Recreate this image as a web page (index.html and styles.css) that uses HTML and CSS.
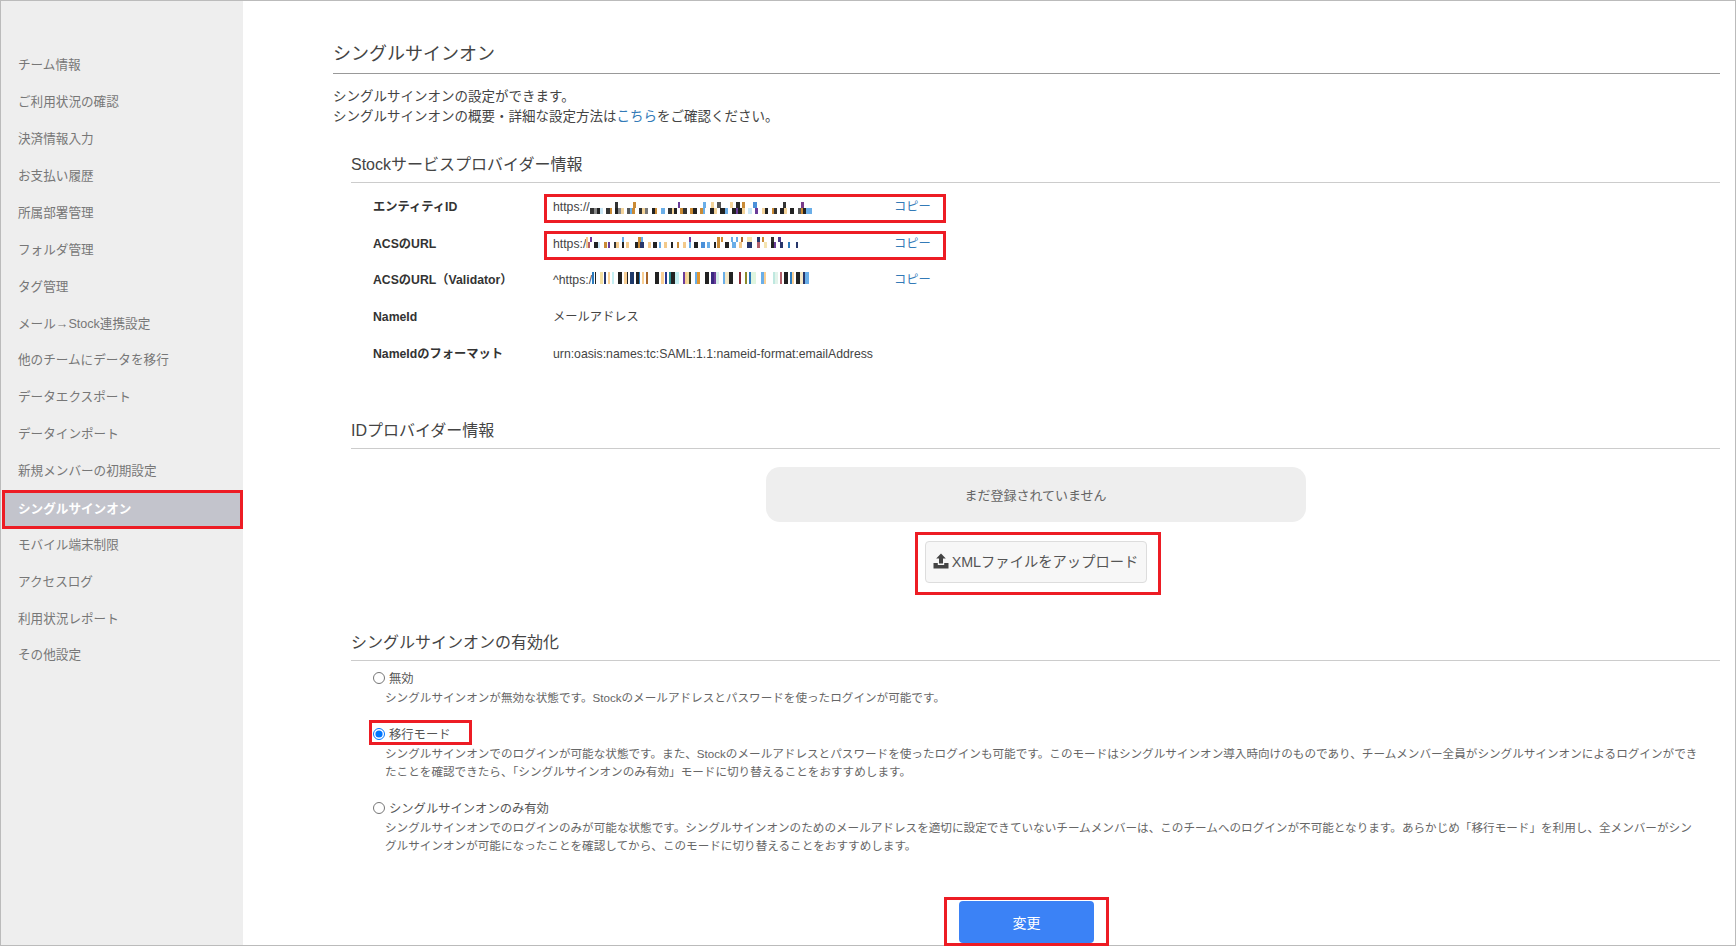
FILE: index.html
```html
<!DOCTYPE html>
<html lang="ja">
<head>
  <meta charset="UTF-8">
  <title>シングルサインオン</title>
  <link rel="stylesheet" href="styles.css">
</head>
<body>
  <div class="frame">
    <nav class="sidebar">
      <a class="nav-item">チーム情報</a>
      <a class="nav-item">ご利用状況の確認</a>
      <a class="nav-item">決済情報入力</a>
      <a class="nav-item">お支払い履歴</a>
      <a class="nav-item">所属部署管理</a>
      <a class="nav-item">フォルダ管理</a>
      <a class="nav-item">タグ管理</a>
      <a class="nav-item">メール→Stock連携設定</a>
      <a class="nav-item">他のチームにデータを移行</a>
      <a class="nav-item">データエクスポート</a>
      <a class="nav-item">データインポート</a>
      <a class="nav-item">新規メンバーの初期設定</a>
      <a class="nav-item active">シングルサインオン</a>
      <a class="nav-item">モバイル端末制限</a>
      <a class="nav-item">アクセスログ</a>
      <a class="nav-item">利用状況レポート</a>
      <a class="nav-item">その他設定</a>
    </nav>

    <main class="content">
      <h1 class="page-title">シングルサインオン</h1>
      <p class="lead">シングルサインオンの設定ができます。<br>シングルサインオンの概要・詳細な設定方法は<a class="link">こちら</a>をご確認ください。</p>

      <section class="section sp-section">
        <h2 class="section-title">Stockサービスプロバイダー情報</h2>
        <div class="info-row marked">
          <span class="info-label">エンティティID</span>
          <span class="info-value">https://<i class="mosaic mosaic-a"></i></span>
          <a class="copy">コピー</a>
        </div>
        <div class="info-row marked">
          <span class="info-label">ACSのURL</span>
          <span class="info-value">https:/<i class="mosaic mosaic-b"></i></span>
          <a class="copy">コピー</a>
        </div>
        <div class="info-row">
          <span class="info-label">ACSのURL（Validator）</span>
          <span class="info-value">^https:/<i class="mosaic mosaic-c"></i></span>
          <a class="copy">コピー</a>
        </div>
        <div class="info-row">
          <span class="info-label">NameId</span>
          <span class="info-value">メールアドレス</span>
        </div>
        <div class="info-row">
          <span class="info-label">NameIdのフォーマット</span>
          <span class="info-value">urn:oasis:names:tc:SAML:1.1:nameid-format:emailAddress</span>
        </div>
      </section>

      <section class="section idp-section">
        <h2 class="section-title">IDプロバイダー情報</h2>
        <div class="empty-box">まだ登録されていません</div>
        <div class="upload-wrap">
          <button class="upload-btn">
            <svg class="upload-icon" viewBox="0 0 16 16"><path d="M8 .5 L12.8 5.6 H10 V10.6 H6 V5.6 H3.2 Z"/><path d="M.5 10 H4.8 V12 H11.2 V10 H15.5 V15.5 H.5 Z"/></svg>
            XMLファイルをアップロード
          </button>
        </div>
      </section>

      <section class="section enable-section">
        <h2 class="section-title">シングルサインオンの有効化</h2>
        <div class="option">
          <label class="option-label"><input type="radio" name="sso">無効</label>
          <p class="option-desc">シングルサインオンが無効な状態です。Stockのメールアドレスとパスワードを使ったログインが可能です。</p>
        </div>
        <div class="option">
          <label class="option-label marked-radio"><input type="radio" name="sso" checked>移行モード</label>
          <p class="option-desc">シングルサインオンでのログインが可能な状態です。また、Stockのメールアドレスとパスワードを使ったログインも可能です。このモードはシングルサインオン導入時向けのものであり、チームメンバー全員がシングルサインオンによるログインができたことを確認できたら、「シングルサインオンのみ有効」モードに切り替えることをおすすめします。</p>
        </div>
        <div class="option">
          <label class="option-label"><input type="radio" name="sso">シングルサインオンのみ有効</label>
          <p class="option-desc">シングルサインオンでのログインのみが可能な状態です。シングルサインオンのためのメールアドレスを適切に設定できていないチームメンバーは、このチームへのログインが不可能となります。あらかじめ「移行モード」を利用し、全メンバーがシングルサインオンが可能になったことを確認してから、このモードに切り替えることをおすすめします。</p>
        </div>
      </section>

      <div class="submit-row">
        <div class="submit-mark"><button class="submit-btn">変更</button></div>
      </div>
    </main>
  </div>
</body>
</html>
```

FILE: styles.css
```css
html, body {
  margin: 0;
  height: 100%;
  overflow: hidden;
}

body {
  background: #fff;
  color: #444;
  font-family: "Liberation Sans", "Noto Sans CJK JP", sans-serif;
  font-size: 12px;
}

.frame {
  display: flex;
  height: 946px;
  box-sizing: border-box;
  border: 1px solid #bbb;
}

/* sidebar */
.sidebar {
  width: 242px;
  flex: none;
  background: #eee;
  padding-top: 44.5px;
  box-sizing: border-box;
}

.nav-item {
  display: flex;
  align-items: center;
  height: 36.875px;
  padding-left: 17px;
  box-sizing: border-box;
  color: #777;
  font-size: 12.6px;
}

.nav-item.active {
  background: #c3c4cc;
  border: 3px solid #ed1c24;
  padding: 0 0 5px 13px;
  margin: 2px 0 -4.1px 1px;
  height: 39px;
  color: #fff;
  font-weight: bold;
}

/* main */
.content {
  flex: 1;
  padding: 41px 15px 0 90px;
  min-width: 0;
}

.page-title {
  margin: 0;
  font-size: 18px;
  font-weight: normal;
  line-height: 24px;
  padding-bottom: 7px;
  border-bottom: 1px solid #999;
}

.lead {
  margin: 13px 0 0;
  font-size: 13.5px;
  line-height: 20px;
}

.link, .copy {
  color: #337ab7;
}

.section {
  margin-left: 18px;
}

.sp-section { margin-top: 27px; }
.idp-section { margin-top: 48px; }
.enable-section { margin-top: 49px; }

.section-title {
  margin: 0;
  font-size: 16px;
  font-weight: normal;
  line-height: 22px;
  padding-bottom: 6px;
  border-bottom: 1px solid #ccc;
}

/* provider info */
.info-row {
  display: flex;
  align-items: center;
  height: 36.6px;
  padding-left: 22px;
  position: relative;
  font-size: 12.25px;
  line-height: 16px;
}

.section-title + .info-row { margin-top: 6px; }

.info-label {
  width: 180px;
  flex: none;
  font-weight: bold;
  color: #333;
}

.info-value {
  width: 341px;
  flex: none;
  display: flex;
  align-items: center;
  white-space: nowrap;
}

.marked::after {
  content: "";
  position: absolute;
  left: 193px;
  top: 5px;
  width: 402px;
  height: 29px;
  box-sizing: border-box;
  border: 3px solid #ed1c24;
}

/* the blurred part of the urls */
.mosaic {
  display: block;
  background-repeat: no-repeat;
}

.mosaic-a {
  width: 222px;
  height: 12px;
  margin-top: 1px;
  background-image:
    linear-gradient(90deg, #fff 0 25px, #333 25px 28px, #fff 28px 43px, #c98a35 43px 46px, #fff 46px 88px, #6a3d9a 88px 90px, #fff 90px 113px, #6aaee8 113px 116px, #fff 116px 121px, #f3d39a 121px 124px, #fff 124px 127px, #555 127px 131px, #fff 131px 140px, #f3d39a 140px 143px, #fff 143px 146px, #2a2a2a 146px 150px, #fff 150px 152px, #c98a35 152px 155px, #fff 155px 163px, #4a90d9 163px 167px, #fff 167px 193px, #333 193px 196px, #fff 196px 211px, #7a3b8a 211px 214px, #fff 214px),
    linear-gradient(90deg, #333 0 4px, #888 4px 7px, #222 7px 10px, #c9e6f5 10px 13px, #fff 13px 16px, #333 16px 20px, #c98a35 20px 22px, #fff 22px 25px, #222 25px 28px, #888 28px 31px, #f3d39a 31px 34px, #fff 34px 37px, #555 37px 40px, #6aaee8 40px 42px, #c98a35 42px 45px, #fff 45px 49px, #333 49px 52px, #f3d39a 52px 55px, #777 55px 58px, #fff 58px 62px, #222 62px 65px, #c98a35 65px 67px, #fff 67px 71px, #6aaee8 71px 75px, #fff 75px 78px, #333 78px 82px, #f3d39a 82px 84px, #222 84px 87px, #fff 87px 90px, #c98a35 90px 93px, #333 93px 97px, #fff 97px 100px, #c98a35 100px 103px, #222 103px 107px, #fff 107px 110px, #c98a35 110px 113px, #6aaee8 113px 115px, #fff 115px 120px, #222 120px 124px, #f3d39a 124px 127px, #fff 127px 130px, #222 130px 135px, #6aaee8 135px 138px, #fff 138px 142px, #222 142px 146px, #6a3d9a 146px 148px, #222 148px 152px, #f3d39a 152px 155px, #fff 155px 158px, #c9e6f5 158px 162px, #fff 162px 165px, #6a3d9a 165px 168px, #fff 168px 172px, #f3d39a 172px 175px, #222 175px 178px, #fff 178px 182px, #c98a35 182px 184px, #333 184px 187px, #fff 187px 190px, #222 190px 194px, #f3d39a 194px 197px, #fff 197px 200px, #222 200px 204px, #fff 204px 208px, #555 208px 211px, #c98a35 211px 213px, #222 213px 216px, #6aaee8 216px 222px);
  background-size: 222px 6px, 222px 6px;
  background-position: 0 0, 0 6px;
}

.mosaic-b {
  width: 214px;
  height: 11px;
  margin-top: -2px;
  background-image:
    linear-gradient(90deg, #f3c98a 0 2px, #fff 2px 4px, #6a3d9a 4px 6px, #fff 6px 36px, #6aaee8 36px 38px, #fff 38px 52px, #c98a35 52px 55px, #6aaee8 55px 57px, #fff 57px 103px, #6a3d9a 103px 105px, #fff 105px 131px, #c98a35 131px 134px, #fff 134px 135px, #c98a35 135px 137px, #fff 137px 145px, #6aaee8 145px 147px, #fff 147px 150px, #6aaee8 150px 152px, #fff 152px 155px, #a8662a 155px 157px, #fff 157px 161px, #f5e4b0 161px 166px, #fff 166px 171px, #27366b 171px 174px, #fff 174px 176px, #c98a35 176px 178px, #fff 178px 185px, #333 185px 188px, #fff 188px 192px, #4a3d8a 192px 195px, #fff 195px),
    linear-gradient(90deg, #f3c98a 0 2px, #b5606b 2px 4px, #fff 4px 8px, #222 8px 12px, #c9e6f5 12px 14px, #fff 14px 18px, #c98a35 18px 21px, #fff 21px 22px, #6a3d9a 22px 24px, #fff 24px 28px, #333 28px 30px, #f3c98a 30px 33px, #fff 33px 36px, #222 36px 38px, #fff 38px 40px, #f3c98a 40px 43px, #fff 43px 49px, #222 49px 52px, #c98a35 52px 54px, #27366b 54px 58px, #fff 58px 62px, #f3c98a 62px 65px, #fff 65px 67px, #222 67px 71px, #fff 71px 73px, #6aaee8 73px 75px, #fff 75px 78px, #f3c98a 78px 81px, #fff 81px 85px, #222 85px 87px, #fff 87px 91px, #c98a35 91px 93px, #fff 93px 97px, #f3c98a 97px 100px, #fff 100px 103px, #6aaee8 103px 105px, #fff 105px 108px, #222 108px 112px, #fff 112px 115px, #4a90d9 115px 119px, #fff 119px 121px, #6aaee8 121px 124px, #fff 124px 128px, #222 128px 130px, #fff 130px 131px, #c98a35 131px 134px, #fff 134px 139px, #222 139px 143px, #fff 143px 146px, #6aaee8 146px 150px, #fff 150px 153px, #f3c98a 153px 156px, #fff 156px 161px, #27366b 161px 166px, #fff 166px 171px, #b5606b 171px 174px, #fff 174px 178px, #f5e4b0 178px 181px, #fff 181px 185px, #222 185px 188px, #6a3d9a 188px 190px, #fff 190px 194px, #27366b 194px 197px, #fff 197px 202px, #2b7bbd 202px 204px, #fff 204px 210px, #27366b 210px 212px, #fff 212px);
  background-size: 214px 5px, 214px 6px;
  background-position: 0 0, 0 5px;
}

.mosaic-c {
  width: 217px;
  height: 12px;
  margin-top: -4px;
  background-image:
    linear-gradient(90deg, #2b7bbd 0 2px, #fff 2px 3px, #222 3px 4px, #fff 4px 8px, #f4dfa0 8px 11px, #fff 11px 12px, #27366b 12px 14px, #fff 14px 16px, #f9cf94 16px 18px, #fff 18px 20px, #c4eef2 20px 22px, #fff 22px 26px, #222 26px 30px, #fff 30px 32px, #f9cf94 32px 35px, #222 35px 36px, #fff 36px 38px, #1f3a6b 38px 42px, #fff 42px 44px, #222 44px 47px, #2b7bbd 47px 48px, #fff 48px 50px, #f9cf94 50px 52px, #fff 52px 54px, #a8662a 54px 56px, #fff 56px 63px, #222 63px 67px, #fff 67px 69px, #f9cf94 69px 72px, #fff 72px 73px, #27368f 73px 75px, #fff 75px 77px, #2b8a8f 77px 79px, #222 79px 83px, #c4eef2 83px 87px, #fff 87px 91px, #6a3d9a 91px 93px, #f9cf94 93px 95px, #f4dfa0 95px 97px, #3a3a22 97px 99px, #fff 99px 103px, #6aaee8 103px 105px, #e0962f 105px 108px, #fff 108px 113px, #222 113px 117px, #fff 117px 119px, #3a2a80 119px 122px, #6a3d9a 122px 124px, #d8f0ea 124px 127px, #fff 127px 131px, #6aaee8 131px 133px, #f4e8c8 133px 137px, #222 137px 141px, #fff 141px 147px, #8a2a35 147px 149px, #fff 149px 153px, #8a8a2a 153px 155px, #fff 155px 157px, #2b7bbd 157px 159px, #dff5df 159px 164px, #fff 164px 169px, #6aaee8 169px 172px, #f9cf94 172px 174px, #fff 174px 181px, #bfe8e0 181px 183px, #e2f3ea 183px 186px, #fff 186px 188px, #b5606b 188px 190px, #fff 190px 192px, #222 192px 196px, #fff 196px 198px, #2b7bbd 198px 200px, #f9cf94 200px 202px, #fff 202px 204px, #222 204px 208px, #f4e8c8 208px 211px, #27366b 211px 213px, #6aaee8 213px 217px);
}

/* idp */
.empty-box {
  width: 540px;
  height: 55px;
  margin: 18px auto 0;
  background: #eee;
  border-radius: 14px;
  display: flex;
  align-items: center;
  justify-content: center;
  color: #666;
  font-size: 13px;
}

.upload-wrap {
  position: relative;
  width: 222px;
  margin: 19px auto 0;
}

.upload-wrap::after {
  content: "";
  position: absolute;
  left: -10px;
  top: -9px;
  width: 246px;
  height: 63px;
  box-sizing: border-box;
  border: 3px solid #ed1c24;
}

.upload-btn {
  width: 222px;
  height: 42px;
  background: #f7f7f7;
  border: 1px solid #ddd;
  border-radius: 4px;
  color: #555;
  font-family: inherit;
  font-size: 14.3px;
  display: flex;
  align-items: center;
  justify-content: center;
  gap: 3px;
  padding: 0 0 2px;
}

.upload-icon {
  width: 16px;
  height: 16px;
  fill: #444;
}

/* options */
.option {
  margin-left: 22px;
  margin-bottom: 17px;
}

.section-title + .option { margin-top: 7px; }

.option-label {
  display: inline-flex;
  align-items: center;
  height: 21px;
  gap: 4px;
  color: #555;
  font-size: 12.3px;
  vertical-align: top;
}

.option-label input {
  margin: 0;
  width: 12px;
  height: 12px;
}

.marked-radio {
  position: relative;
}

.marked-radio::after {
  content: "";
  position: absolute;
  left: -4px;
  top: -4px;
  width: 103px;
  height: 25px;
  box-sizing: border-box;
  border: 3px solid #ed1c24;
}

.option-desc {
  margin: 0 20px 0 12px;
  font-size: 11.6px;
  line-height: 18px;
  color: #666;
}

/* submit */
.submit-row {
  display: flex;
  justify-content: center;
  margin-top: 42px;
}

.submit-mark {
  width: 165px;
  height: 49px;
  box-sizing: border-box;
  border: 3px solid #ed1c24;
  padding-top: 1px;
  display: flex;
  justify-content: center;
  flex: none;
}

.submit-btn {
  width: 135px;
  height: 42px;
  background: #3b82f6;
  border: 0;
  border-radius: 4px;
  color: #fff;
  font-family: inherit;
  font-size: 14px;
}
```
